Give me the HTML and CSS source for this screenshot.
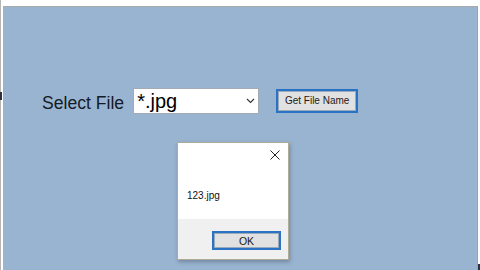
FILE: index.html
```html
<!DOCTYPE html>
<html lang="en">

<head>
    <meta charset="UTF-8">
    <meta name="viewport" content="width=device-width, initial-scale=1.0">
    <title>Select File</title>
    <link rel="stylesheet" href="styles.css">
</head>

<body>
    <div class="frame">
        <div class="client">
            <span class="edge-mark"></span>
            <div class="row">
                <label class="label">Select File</label>
                <div class="combo">
                    <span class="combo-text">*.jpg</span>
                    <svg class="chevron" width="9" height="6" viewBox="0 0 9 6">
                        <path d="M1 1 L4.5 4.5 L8 1" fill="none" stroke="#333" stroke-width="1.1" />
                    </svg>
                </div>
                <button class="btn">Get File Name</button>
            </div>
            <span class="corner-mark"></span>
        </div>
    </div>

    <!-- message box -->
    <div class="msgbox">
        <div class="msg-top">
            <div class="msg-title">
                <svg width="10" height="10" viewBox="0 0 10 10">
                    <path d="M0.5 0.5 L9.5 9.5 M9.5 0.5 L0.5 9.5" stroke="#222" stroke-width="1" />
                </svg>
            </div>
            <p class="msg-text">123.jpg</p>
        </div>
        <div class="msg-bottom">
            <button class="btn ok">OK</button>
        </div>
    </div>
</body>

</html>
```

FILE: styles.css
```css
* {
    margin: 0;
    padding: 0;
    box-sizing: border-box;
}

body {
    width: 480px;
    height: 270px;
    overflow: hidden;
    background: #fff;
    font-family: "Liberation Sans", Arial, sans-serif;
    position: relative;
}

.frame {
    height: 270px;
    padding: 6px 2px 0 2px;
    background: #fff;
    border-left: 1px solid #b5b5b5;
}

.client {
    position: relative;
    height: 264px;
    width: 475px;
    background: #99b4d1;
    border-top: 1px solid #a9a9a9;
    border-right: 1px solid #a3a3a3;
}

.row {
    display: flex;
    align-items: center;
    padding: 80px 0 0 39px;
}

.label {
    font-size: 17.6px;
    color: #141a26;
    margin-right: 9px;
    margin-top: 6px;
}

.combo {
    width: 126px;
    height: 26px;
    background: #fff;
    border: 1px solid #a3acb6;
    display: flex;
    align-items: center;
    justify-content: space-between;
    padding: 0 3px 0 3px;
}

.combo-text {
    font-size: 20px;
    color: #000;
    margin-top: 1px;
}

.chevron {
    margin-top: 1px;
}

.btn {
    font-family: "Liberation Sans", Arial, sans-serif;
    font-size: 10px;
    color: #1a1a1a;
    background: #e1e1e1;
    border: 2px solid #2a72c4;
    outline: 1px solid #9ab;
    outline-offset: -3px;
}

.row .btn {
    width: 82px;
    height: 24px;
    margin-left: 17px;
}

.edge-mark {
    position: absolute;
    left: -3px;
    top: 85px;
    width: 2px;
    height: 8px;
    background: #2b3342;
}

.corner-mark {
    position: absolute;
    right: -3px;
    bottom: 0;
    width: 2px;
    height: 6px;
    background: #2b3342;
}

.msgbox {
    position: absolute;
    left: 177px;
    top: 142px;
    width: 112px;
    height: 118px;
    border: 1px solid #b0aa98;
    box-shadow: 1px 2px 4px rgba(40, 50, 70, 0.35);
    display: flex;
    flex-direction: column;
}

.msg-top {
    background: #fff;
    flex: 1;
}

.msg-title {
    display: flex;
    justify-content: flex-end;
    padding: 7px 8px 0 0;
}

.msg-text {
    font-size: 10px;
    color: #111;
    padding: 30px 0 0 9px;
}

.msg-bottom {
    background: #f0f0f0;
    height: 40px;
    display: flex;
    justify-content: flex-end;
    padding: 12px 7px 0 0;
}

.ok {
    width: 69px;
    height: 19px;
    font-size: 10.5px;
}
```
